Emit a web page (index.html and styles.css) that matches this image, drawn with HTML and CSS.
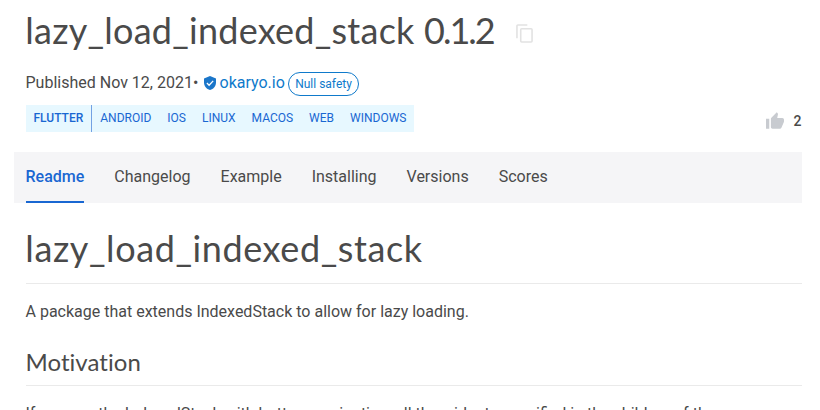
FILE: index.html
```html
<!DOCTYPE html>
<html lang="en">
<head>
<meta charset="utf-8">
<title>lazy_load_indexed_stack</title>
<link rel="stylesheet" href="styles.css">
</head>
<body>
<header class="package">
  <h1 class="title"><span class="title-text">lazy_load_indexed_stack <span class="version">0.1.2</span></span>
    <svg class="copy" viewBox="0 0 18 20" fill="none" stroke="#e2e2e2" stroke-width="1.7"><path d="M1 15V2q0-1 1-1h10M6 5h10q1 0 1 1v12q0 1-1 1H6q-1 0-1-1V6q0-1 1-1z"/></svg>
  </h1>
  <div class="meta"><span class="published">Published Nov 12, 2021•</span>
    <svg class="shield" viewBox="0 0 12 14"><path fill="#1b76c9" d="M6 0L0 2.600v4C0 10.100 2.500 13.200 6 14c3.500-.8 6-3.900 6-7.400v-4z"/><path fill="none" stroke="#fff" stroke-width="1.300" d="M2.900 7l2.200 2.200 4.100-4.300"/></svg>
    <a class="publisher">okaryo.io</a><span class="badge">Null safety</span>
  </div>
  <div class="tagrow">
    <div class="tags"><b class="sdk">FLUTTER</b><span>ANDROID</span><span>IOS</span><span>LINUX</span><span>MACOS</span><span>WEB</span><span>WINDOWS</span></div>
    <div class="likes"><svg class="thumb" viewBox="1 1 22 20"><path d="M1 21h4V9H1v12zm22-11c0-1.100-.9-2-2-2h-6.310l.95-4.570.03-.32c0-.41-.17-.79-.44-1.060L14.170 1 7.590 7.590C7.220 7.950 7 8.450 7 9v10c0 1.100.9 2 2 2h9c.83 0 1.540-.5 1.840-1.220l3.020-7.050c.09-.23.14-.47.14-.73v-2z"/></svg><span>2</span></div>
  </div>
</header>
<nav class="tabs"><a class="active">Readme</a><a>Changelog</a><a>Example</a><a>Installing</a><a>Versions</a><a>Scores</a></nav>
<main class="readme">
  <h2 class="heading">lazy_load_indexed_stack</h2>
  <p class="intro">A package that extends IndexedStack to allow for lazy loading.</p>
  <h3 class="section">Motivation</h3>
  <p class="body-text">If you use the IndexedStack with bottom navigation, all the widgets specified in the children of the</p>
</main>
</body>
</html>
```

FILE: styles.css
```css
* { box-sizing: border-box; }
html, body { height: 100%; }
body { margin: 0; overflow: hidden; background: #fff; color: #4a4a4a; font: 16px/24px Roboto, sans-serif; }
h1, h2, h3, p { margin: 0; font-weight: 400; }
svg { display: block; flex: none; }
.package { height: 152px; padding: 0 18px 0 25.5px; }
.title { display: flex; height: 61px; font: 36px/60px Lato, sans-serif; letter-spacing: .25px; white-space: nowrap; }
.title-text { width: 491px; margin-left: -.2px; }
.version { letter-spacing: -2px; }
.copy { width: 17px; height: 19px; margin: 24px 0 0 -.3px; }
.meta { display: flex; align-items: center; height: 44px; }
.published { width: 178px; margin-top: -1px; }
.shield { width: 12px; height: 14px; }
.publisher { width: 65px; margin: -1px 0 0 4px; color: #0f7acb; }
.badge { width: 71px; height: 24px; margin: 2px 0 0 3.5px; border: 1px solid #0f7acb; border-radius: 12px; color: #0f7acb; font-size: 12px; line-height: 22px; text-align: center; }
.tagrow { display: flex; justify-content: space-between; }
.tags { display: flex; width: 388px; height: 27px; background: #e7f8ff; color: #1967d2; font-size: 12px; line-height: 26px; }
.tags span { padding: 0 8px; }
.sdk { padding: 0 8px; border-right: 1px solid #73a1e3; font-weight: 500; }
.likes { display: flex; gap: 9px; margin: 4px .6px 0 0; font-size: 14px; font-weight: 500; }
.thumb { width: 18px; height: 17px; margin-top: 3px; fill: #c8cbd0; }
.tabs { display: flex; gap: 30px; height: 51px; margin: 0 18px 0 14px; padding-left: 11.5px; background: #f5f5f7; line-height: 49px; }
.active { border-bottom: 2px solid #1967d2; color: #1967d2; font-weight: 500; }
.readme { padding: 0 18px 0 25.5px; }
.heading { height: 81px; border-bottom: 1px solid #eaeaea; font: 36px/91px Lato, sans-serif; letter-spacing: .6px; text-indent: -.2px; }
.intro { height: 55px; padding-top: 16px; }
.section { height: 47px; border-bottom: 1px solid #eaeaea; font: 24px/46px Lato, sans-serif; font-variant-ligatures: none; letter-spacing: .05px; }
.body-text { padding-top: 16px; white-space: nowrap; }
```
